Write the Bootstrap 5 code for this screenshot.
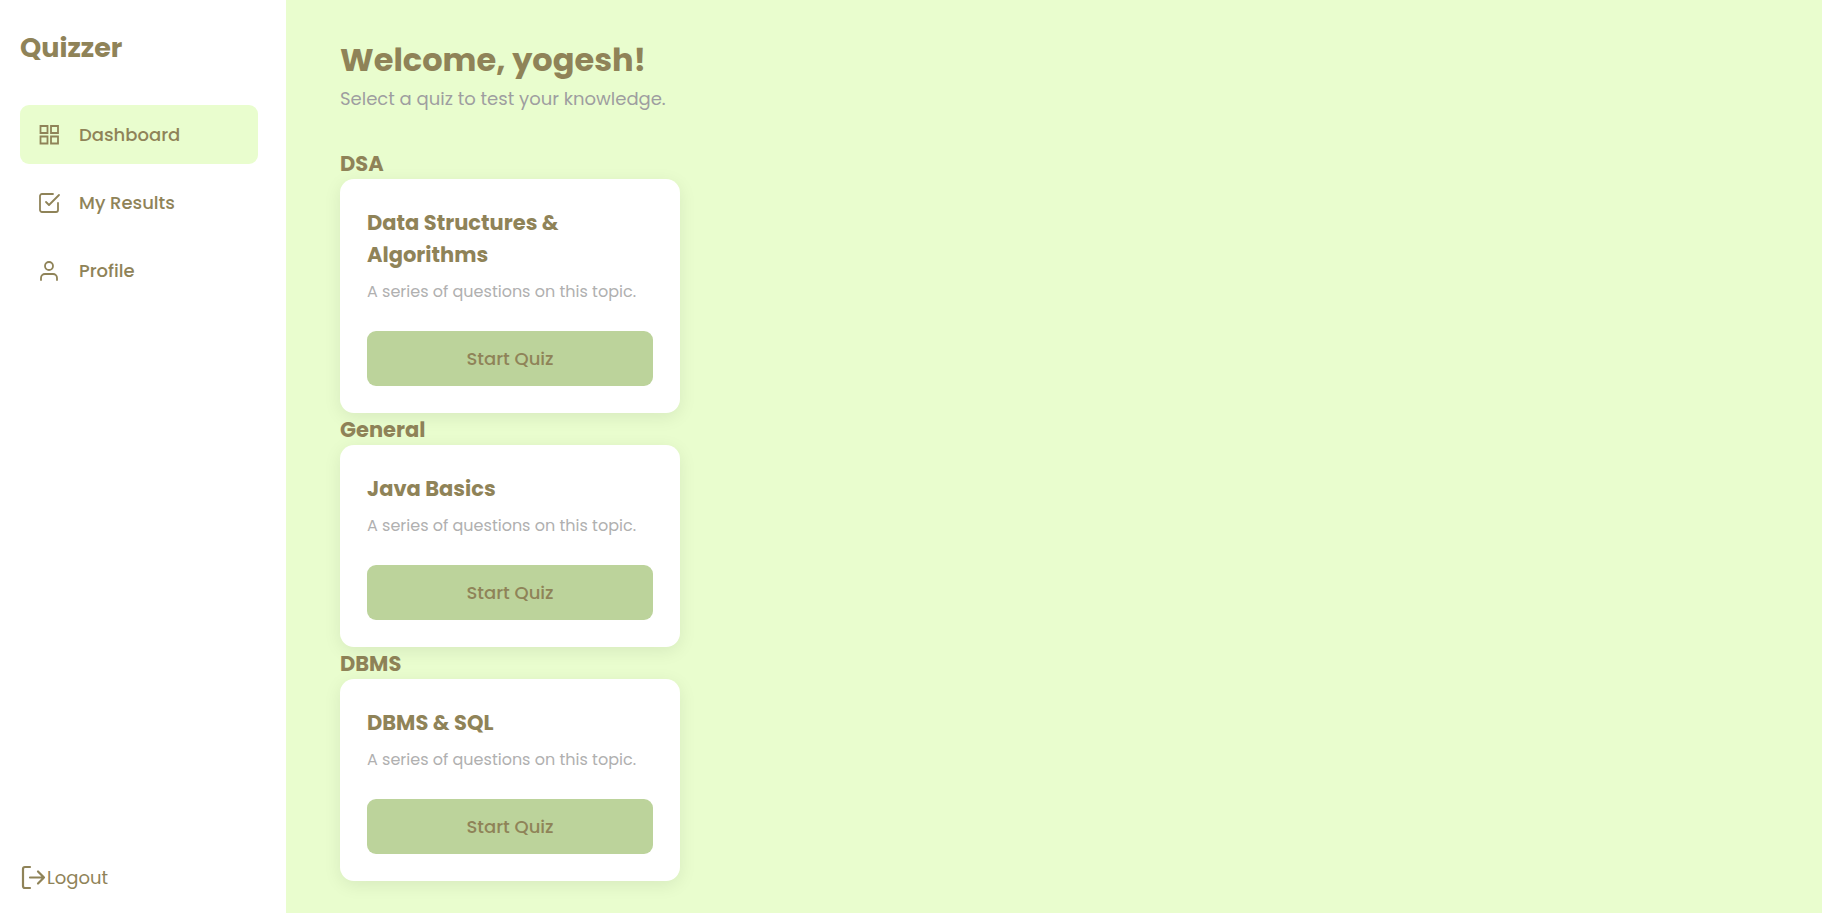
<!DOCTYPE html>
<html lang="en">
<head>
<meta charset="utf-8">
<meta name="viewport" content="width=device-width, initial-scale=1">
<title>Quizzer</title>
<link href="https://cdn.jsdelivr.net/npm/bootstrap@5.3.0/dist/css/bootstrap.min.css" rel="stylesheet">
<style>
  :root { --olive: #8f8358; --mint: #e9fdce; --leaf: #bcd39b; }
  body { font-family: Poppins, Inter, sans-serif; font-size: 18px; line-height: 27px; color: var(--olive); background: var(--mint); }
  .sidebar { width: 286px; padding: 27px 28px 20px 20px; }
  .brand { font-size: 27px; line-height: 41px; margin-bottom: 37px; }
  .side-nav { gap: 9px; }
  .side-nav .nav-link { height: 59px; padding: 0 17px; gap: 18px; border-radius: 9px; color: var(--olive); font-weight: 500; }
  .side-nav .nav-link.active { background: var(--mint); }
  .logout { height: 31px; color: var(--olive); }
  svg { fill: none; stroke: currentColor; stroke-linecap: round; stroke-linejoin: round; flex: none; }
  svg.squares { stroke-linejoin: miter; }
  .content { padding: 36px 54px 31px; }
  .welcome { font-size: 32px; line-height: 48px; }
  .intro { color: #9e9ea0; margin-bottom: 33px; line-height: 30px; }
  .topic, .quiz-title { font-size: 21px; line-height: 32px; }
  .topic { padding-top: 2px; line-height: 30px; }
  .quiz { max-width: 340px; padding: 28px 27px 27px; border-radius: 14px; box-shadow: 0 4px 18px rgba(0, 0, 0, .08); }
  .quiz-title { margin-bottom: 8px; }
  .quiz-text { font-size: 16px; line-height: 25px; margin-bottom: 27px; color: #b0b0b0; }
  .start { height: 55px; border: 0; border-radius: 9px; font-size: 18px; font-weight: 500; background: var(--leaf); color: var(--olive); }
</style>
</head>
<body>
<div class="d-flex min-vh-100">
  <aside class="sidebar d-flex flex-column flex-shrink-0 bg-white">
    <div class="brand fw-bold">Quizzer</div>
    <nav class="side-nav nav flex-column">
      <a class="nav-link active d-flex align-items-center" href="#" aria-current="page">
        <svg class="squares" width="24" height="24" viewBox="0 0 24 24" stroke-width="1.8"><path d="M3.500 3h7v7h-7zM14 3h7v7h-7zM14 13.500h7v7h-7zM3.500 13.500h7v7h-7z"/></svg>
        Dashboard</a>
      <a class="nav-link d-flex align-items-center" href="#">
        <svg width="24" height="24" viewBox="0 0 24 24" stroke-width="1.8"><path d="M9 11l3 3L22 4"/><path d="M21 12v7a2 2 0 0 1-2 2H5a2 2 0 0 1-2-2V5a2 2 0 0 1 2-2h11"/></svg>
        My Results</a>
      <a class="nav-link d-flex align-items-center" href="#">
        <svg width="24" height="24" viewBox="0 0 24 24" stroke-width="1.8"><path d="M20 21v-2a4 4 0 0 0-4-4H8a4 4 0 0 0-4 4v2"/><circle cx="12" cy="7" r="4"/></svg>
        Profile</a>
    </nav>
    <a class="logout mt-auto d-flex align-items-center text-decoration-none" href="#">
      <svg width="27" height="27" viewBox="0 0 27 27" stroke-width="2.200"><path d="M10 3H5a2 2 0 0 0-2 2v17a2 2 0 0 0 2 2h5M10 13.500h14M18 7.500l6 6-6 6"/></svg>
      Logout</a>
  </aside>
  <main class="content flex-grow-1">
    <h1 class="welcome fw-bold mb-0">Welcome, yogesh!</h1>
    <p class="intro">Select a quiz to test your knowledge.</p>
    <section>
      <h2 class="topic fw-bold mb-0">DSA</h2>
      <div class="quiz card border-0">
        <h3 class="quiz-title fw-bold">Data Structures &amp; Algorithms</h3>
        <p class="quiz-text">A series of questions on this topic.</p>
        <button class="start btn w-100" type="button">Start Quiz</button>
      </div>
    </section>
    <section>
      <h2 class="topic fw-bold mb-0">General</h2>
      <div class="quiz card border-0">
        <h3 class="quiz-title fw-bold">Java Basics</h3>
        <p class="quiz-text">A series of questions on this topic.</p>
        <button class="start btn w-100" type="button">Start Quiz</button>
      </div>
    </section>
    <section>
      <h2 class="topic fw-bold mb-0">DBMS</h2>
      <div class="quiz card border-0">
        <h3 class="quiz-title fw-bold">DBMS &amp; SQL</h3>
        <p class="quiz-text">A series of questions on this topic.</p>
        <button class="start btn w-100" type="button">Start Quiz</button>
      </div>
    </section>
  </main>
</div>
<script src="https://cdn.jsdelivr.net/npm/bootstrap@5.3.0/dist/js/bootstrap.bundle.min.js"></script>
</body>
</html>
